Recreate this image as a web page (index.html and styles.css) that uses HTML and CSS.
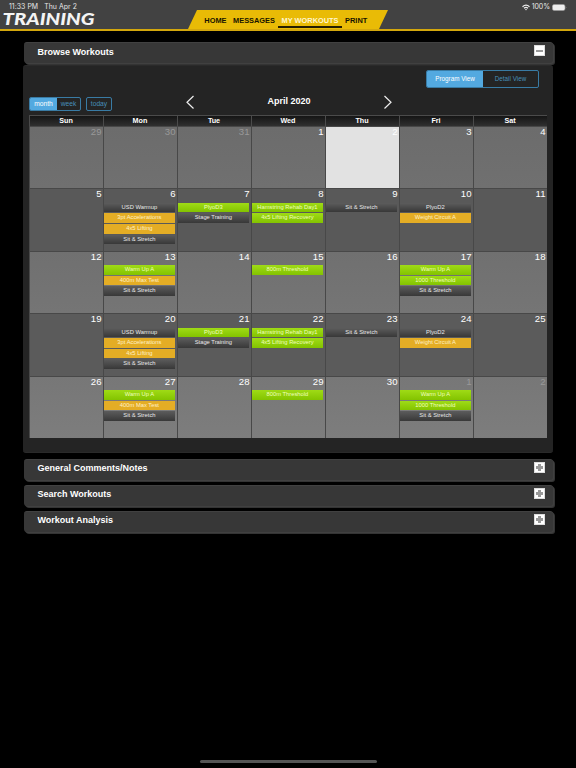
FILE: index.html
```html
<!DOCTYPE html>
<html lang="en">
<head>
    <meta charset="UTF-8">
    <meta name="viewport" content="width=device-width, initial-scale=1.0">
    <title>Training - My Workouts</title>
    <link rel="stylesheet" href="styles.css">
</head>
<body>
    <header class="header">
        <div class="brand">
            <div class="status"><span>11:33 PM</span><span>Thu Apr 2</span></div>
            <svg class="logo" width="98" height="16" viewBox="0 0 98 16">
                <text x="2.500" y="12.800" textLength="92" lengthAdjust="spacingAndGlyphs">TRAINING</text>
            </svg>
        </div>
        <nav class="nav">
            <a>HOME</a>
            <a>MESSAGES</a>
            <a class="active">MY WORKOUTS</a>
            <a>PRINT</a>
        </nav>
        <div class="status device">
            <svg width="8" height="7" viewBox="0 0 16 13" fill="none" stroke="#eee" stroke-width="2.4">
                <path d="M1 5 Q8 -1.5 15 5"/>
                <path d="M4 8 Q8 4.5 12 8"/>
                <path d="M6 10 L8 12.5 L10 10 Q8 8.500 6 10 Z" fill="#eee" stroke="none"/>
            </svg>
            <span>100%</span>
            <svg width="15" height="7" viewBox="0 0 15 7">
                <rect x="0.400" y="0.400" width="12.600" height="6.200" rx="1.800" fill="#eee" stroke="#999" stroke-width="0.600"/>
                <path d="M13.800 2.300 Q15 3.500 13.800 4.700 Z" fill="#aaa"/>
            </svg>
        </div>
    </header>

    <main class="container">
        <div class="bar open">
            <h2>Browse Workouts</h2>
            <span class="toggle minus"></span>
        </div>
        <section class="panel">
            <div class="views">
                <div class="group">
                    <button class="view on">Program View</button>
                    <button class="view">Detail View</button>
                </div>
            </div>
            <div class="toolbar">
                <div class="periods">
                    <div class="group">
                        <button class="month on">month</button>
                        <button class="week">week</button>
                    </div>
                    <div class="group"><button class="today">today</button></div>
                </div>
                <div class="pager">
                    <svg width="10" height="16" viewBox="0 0 10 16"><path d="M8.500 2 L2 8.300 L8.500 14.500"/></svg>
                    <h3>April 2020</h3>
                    <svg width="10" height="16" viewBox="0 0 10 16"><path d="M1.500 2 L8 8.300 L1.500 14.500"/></svg>
                </div>
            </div>
            <div class="calendar">
                <div class="days">
                    <span>Sun</span><span>Mon</span><span>Tue</span><span>Wed</span><span>Thu</span><span>Fri</span><span>Sat</span>
                </div>
                <div class="weeks" id="weeks"></div>
            </div>
        </section>

        <div class="bar">
            <h2>General Comments/Notes</h2>
            <span class="toggle plus"></span>
        </div>
        <div class="bar">
            <h2>Search Workouts</h2>
            <span class="toggle plus"></span>
        </div>
        <div class="bar">
            <h2>Workout Analysis</h2>
            <span class="toggle plus"></span>
        </div>
    </main>
    <div class="home"></div>

    <script>
        // Workouts by weekday, "color:name"
        const weekA = [
            [],
            ['gray:USD Warmup', 'orange:3pt Accelerations', 'orange:4x5 Lifting', 'gray:Sit & Stretch'],
            ['green:PlyoD3', 'gray:Stage Training'],
            ['green:Hamstring Rehab Day1', 'green:4x5 Lifting Recovery'],
            ['gray:Sit & Stretch'],
            ['gray:PlyoD2', 'orange:Weight Circuit A'],
            []
        ];
        const weekB = [
            [],
            ['green:Warm Up A', 'orange:400m Max Test', 'gray:Sit & Stretch'],
            [],
            ['green:800m Threshold'],
            [],
            ['green:Warm Up A', 'green:1000 Threshold', 'gray:Sit & Stretch'],
            []
        ];
        const schedule = [[], weekA, weekB, weekA, weekB];
        const weeks = document.getElementById('weeks');

        for (let i = 0; i < 35; i++) {
            const date = new Date(2020, 2, 29 + i);
            const cell = document.createElement('div');
            cell.className = 'cell';
            if (date.getMonth() !== 3) cell.classList.add('other');
            if (i === 4) cell.classList.add('current');

            const number = document.createElement('div');
            number.className = 'number';
            number.textContent = date.getDate();
            cell.appendChild(number);

            const items = schedule[Math.floor(i / 7)][i % 7] || [];
            items.forEach(function(item) {
                const parts = item.split(':');
                const event = document.createElement('div');
                event.className = 'event ' + parts[0];
                event.textContent = parts[1];
                cell.appendChild(event);
            });
            weeks.appendChild(cell);
        }
    </script>
</body>
</html>
```

FILE: styles.css
```css
* {
    box-sizing: border-box;
}

body {
    margin: 0;
    height: 768px;
    background: #000;
    color: #fff;
    font-family: "Liberation Sans", Arial, sans-serif;
    display: flex;
    flex-direction: column;
    overflow: hidden;
}

h2, h3 {
    margin: 0;
    font-size: 9px;
    line-height: 11px;
}

.header {
    height: 31px;
    background: #424242;
    border-bottom: 2px solid #d3a70d;
    display: grid;
    grid-template-columns: 188px 200px 1fr;
    flex: none;
}

.status {
    display: flex;
    gap: 6px;
    height: 8px;
    padding-left: 9px;
    font: 7px/8px Inter, sans-serif;
    color: #e8e8e8;
}

.brand {
    padding-top: 3px;
}

.brand .status {
    font-size: 6.9px;
    letter-spacing: 0.06px;
}

.logo {
    display: block;
    margin-top: 1px;
    overflow: visible;
}

.logo text {
    font: italic 900 16.2px Lato, sans-serif;
    fill: #f4f4f4;
}

.nav {
    height: 19px;
    margin-top: 10px;
    padding: 5px 0 0 13px;
    display: flex;
    background: #e9bb06;
    clip-path: polygon(9px 0, 100% 0, 191px 100%, 0 100%);
}

.nav a {
    height: 13px;
    padding: 0 3.3px;
    font-size: 7.4px;
    line-height: 12px;
    font-weight: bold;
    color: #181400;
    white-space: nowrap;
}

.nav .active {
    color: #fff6cf;
    border-bottom: 2px solid #241d00;
}

.device {
    justify-content: flex-end;
    align-items: center;
    gap: 2px;
    margin-top: 3px;
    padding-right: 9px;
}

.device span {
    letter-spacing: -0.05px;
}

.container {
    width: 530px;
    margin: 11px 0 0 23px;
}

.bar {
    height: 21px;
    margin: 0 0 5px 1px;
    padding: 0 8px 0 13.5px;
    display: flex;
    justify-content: space-between;
    background: #373737;
    border-top: 1px solid #414141;
    border-radius: 3px;
    box-shadow: 1px 1px 0 #404040, 2px 2px 0 #343434;
}

.bar h2 {
    margin-top: 4px;
}

.panel ~ .bar h2 {
    margin-top: 3.4px;
}

.bar.open {
    margin-bottom: 2px;
}

.toggle {
    width: 11px;
    height: 11px;
    margin-top: 2px;
    border: 1px solid #ddd;
    background: #fff;
}

.minus {
    background: linear-gradient(#999, #999) center / 7px 2px no-repeat #fff;
}

.plus {
    background: linear-gradient(#999, #999) center / 7px 3px no-repeat,
        linear-gradient(#999, #999) center / 3px 7px no-repeat #fff;
}

.panel {
    height: 388px;
    margin-bottom: 6px;
    padding: 4px 6px 0;
    background: #242424;
    border: solid #2a2a2a;
    border-width: 1px 0;
    border-radius: 3px;
}

.views {
    display: flex;
    justify-content: flex-end;
    padding-right: 8px;
}

.group {
    display: flex;
    border: 1px solid #397ba4;
    border-radius: 2px;
    overflow: hidden;
}

button {
    height: 12px;
    padding: 0;
    border: 0;
    background: none;
    font: 6.7px/12px "Liberation Sans", Arial, sans-serif;
    color: #478fb9;
}

button.on {
    background: #53a9e0;
    color: #fff;
}

.view {
    width: 55px;
    height: 16px;
    font-size: 6.3px;
}

.view.on {
    width: 56px;
}

.toolbar {
    display: flex;
    align-items: flex-start;
    height: 21px;
    margin-top: 6px;
}

.periods {
    display: flex;
    gap: 5px;
    width: 156px;
    padding-top: 3px;
}

.month {
    width: 27px;
}

.week {
    width: 23px;
}

.today {
    width: 24px;
}

.pager {
    display: flex;
    justify-content: space-between;
    width: 208px;
}

.pager h3 {
    margin-top: 2px;
}

.pager path {
    fill: none;
    stroke: #eee;
    stroke-width: 1.2;
}

.calendar {
    width: 518px;
    border-top: 1px solid #4b4b4b;
}

.days {
    display: grid;
    grid-template-columns: repeat(7, 74px);
    height: 10px;
    background: linear-gradient(#151515, #303030);
    font-size: 7.2px;
    line-height: 10px;
    font-weight: bold;
    text-align: center;
}

.days span {
    padding-right: 1px;
    border-left: 1px solid #4b4b4b;
}

.weeks {
    display: grid;
    grid-template-columns: repeat(7, 74px);
    grid-template-rows: repeat(5, 62.4px);
    width: 518px;
}

.cell {
    border-left: 1px solid #484848;
    border-top: 1px solid #484848;
    background: linear-gradient(#6c6c6c, #707070);
    min-width: 0;
}

.cell:nth-child(n+8) {
    background: #595959;
}

.cell:nth-child(n+15) {
    background: linear-gradient(#707070, #757575);
}

.cell:nth-child(n+22) {
    background: #5b5b5b;
}

.cell:nth-child(n+29) {
    background: linear-gradient(#777, #7d7d7d);
}

.cell.current {
    background: #e2e2e2;
}

.number {
    height: 13.4px;
    padding: 0 1.5px 0 0;
    font-size: 9.6px;
    line-height: 10.500px;
    text-align: right;
}

.other .number {
    color: #999;
}

.event {
    width: 71px;
    height: 9.6px;
    margin: 0 0 1px 0.4px;
    padding-right: 1px;
    font-size: 5.8px;
    line-height: 9px;
    text-align: center;
    white-space: nowrap;
    color: #e8e8e8;
}

.gray {
    background: linear-gradient(#5c5c5c, #383838);
}

.green {
    background: linear-gradient(#9fdb16, #83c300);
    color: #efffbd;
}

.orange {
    background: #e4ad25;
    color: #fff1c5;
}

.home {
    width: 177px;
    height: 3px;
    margin: auto auto 5px;
    border-radius: 2px;
    background: #555;
}
```
